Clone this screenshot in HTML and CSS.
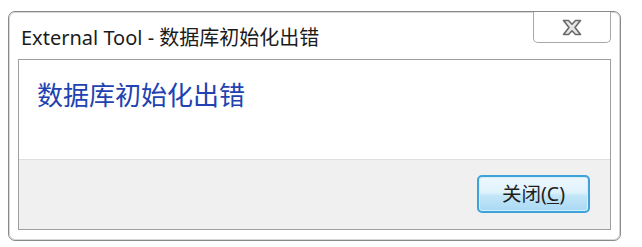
FILE: index.html
```html
<!DOCTYPE html>
<html lang="zh-CN">
<head>
<meta charset="utf-8">
<title>External Tool</title>
<link rel="stylesheet" href="styles.css">
</head>
<body>
<div class="window">
  <div class="titlebar">
    <div class="title">External Tool - 数据库初始化出错</div>
    <div class="close-btn">
      <svg width="22" height="17" viewBox="0 0 22 17">
        <path d="M2.5 1.5 L7.5 1.5 L11 5.2 L14.5 1.5 L19.5 1.5 L14 8.5 L19.5 15.5 L14.5 15.5 L11 11.8 L7.5 15.5 L2.5 15.5 L8 8.5 Z" fill="#e6e6e6" stroke="#6a6a6a" stroke-width="1.6" stroke-linejoin="round"/>
      </svg>
    </div>
  </div>
  <div class="panel">
    <div class="content">
      <div class="message">数据库初始化出错</div>
    </div>
    <div class="footer">
      <button class="btn">关闭(<u>C</u>)</button>
    </div>
  </div>
</div>
</body>
</html>
```
FILE: styles.css
```css
html, body {
  margin: 0;
  padding: 0;
  background: #ffffff;
}
body {
  padding: 11px 0 0 8px;
  font-family: "Noto Sans", "Noto Sans CJK SC", sans-serif;
}
.window {
  box-sizing: border-box;
  width: 613px;
  height: 230px;
  border: 1px solid #8a8a8a;
  border-radius: 7px;
  box-shadow: inset 0 0 0 1px #d8d8d8;
  background: #ffffff;
  display: flex;
  flex-direction: column;
  padding: 0 9px 10px 9px;
}
.titlebar {
  height: 47px;
  display: flex;
  justify-content: space-between;
  align-items: flex-start;
  flex: none;
}
.title {
  padding: 14px 0 0 3px;
  font-size: 20px;
  line-height: 24px;
  color: #1b1b1b;
  white-space: nowrap;
}
.close-btn {
  box-sizing: border-box;
  width: 78px;
  height: 31px;
  border: 1px solid #a8a8a8;
  border-top: none;
  border-radius: 0 0 5px 5px;
  background: #ffffff;
  display: flex;
  align-items: center;
  justify-content: center;
}
.close-btn svg {
  display: block;
  margin-top: 1px;
}
.panel {
  flex: 1;
  border: 1px solid #9e9e9e;
  box-shadow: inset 1px 1px 0 #e6e6e6;
  display: flex;
  flex-direction: column;
}
.content {
  height: 99px;
  background: #ffffff;
  padding: 21px 0 0 18px;
  box-sizing: border-box;
}
.message {
  font-family: "Noto Sans CJK SC", sans-serif;
  font-size: 26px;
  line-height: 26px;
  color: #2142b0;
}
.footer {
  flex: 1;
  background: #f0f0f0;
  border-top: 1px solid #dfdfdf;
  display: flex;
  justify-content: flex-end;
  align-items: flex-start;
  padding: 15px 20px 0 0;
}
.btn {
  box-sizing: border-box;
  width: 113px;
  height: 38px;
  border: 2px solid #3fa3d9;
  border-radius: 5px;
  background: linear-gradient(to bottom, #eef8fe 0%, #dff2fc 45%, #c3e6f8 55%, #a9d9f3 100%);
  box-shadow: inset 0 0 0 1px #d2effc;
  font-family: "Noto Sans", "Noto Sans CJK SC", sans-serif;
  font-size: 19.5px;
  line-height: 22px;
  color: #1e1e1e;
  padding: 0;
  display: flex;
  align-items: center;
  justify-content: center;
}
.btn u {
  text-decoration-thickness: 1px;
  text-underline-offset: 2px;
}
```
